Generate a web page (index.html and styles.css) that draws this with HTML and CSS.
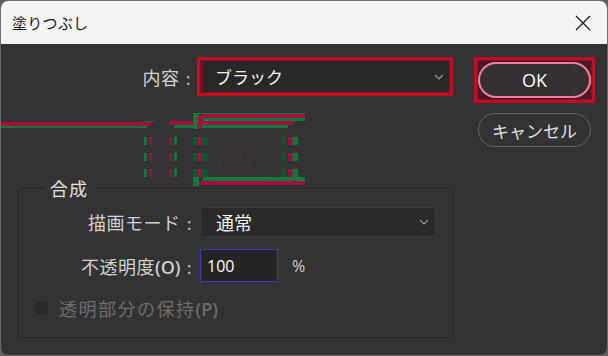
FILE: index.html
```html
<!DOCTYPE html>
<html lang="ja">
<head>
<meta charset="utf-8">
<title>塗りつぶし</title>
<link rel="stylesheet" href="styles.css">
</head>
<body>
<div class="dialog">
  <div class="titlebar">
    <span class="title">塗りつぶし</span>
    <svg class="close" width="16" height="16" viewBox="0 0 16 16"><path d="M1 1 L15 15 M15 1 L1 15" stroke="#1a1a1a" stroke-width="1.3" fill="none"/></svg>
  </div>
  <div class="body">
    <div class="main">
      <div class="row row-content">
        <span class="label">内容 <span class="colon">:</span></span>
        <div class="select hl"><span class="val">ブラック</span><svg class="chev" width="10" height="6" viewBox="0 0 10 6"><path d="M1 1 L5 5 L9 1" stroke="#9a9a9a" stroke-width="1.2" fill="none"/></svg></div>
      </div>
      <fieldset class="group">
        <legend>合成</legend>
        <div class="row">
          <span class="label">描画モード <span class="colon">:</span></span>
          <div class="select plain"><span class="val">通常</span><svg class="chev" width="10" height="6" viewBox="0 0 10 6"><path d="M1 1 L5 5 L9 1" stroke="#9a9a9a" stroke-width="1.2" fill="none"/></svg></div>
        </div>
        <div class="row row-op">
          <span class="label">不透明度<span class="lat">(O)</span> <span class="colon">:</span></span>
          <div class="input">100</div>
          <span class="pct">%</span>
        </div>
        <div class="row row-check">
          <span class="box"></span>
          <span class="check-label">透明部分の保持<span class="lat">(P)</span></span>
        </div>
      </fieldset>
    </div>
    <div class="buttons">
      <div class="hl-btn"><div class="btn ok">OK</div></div>
      <div class="btn cancel">キャンセル</div>
    </div>
  </div>
  <div class="glitch">
    <div class="g red" style="left:0;top:121px;width:150px;height:4px"></div>
    <div class="g green" style="left:0;top:125px;width:146px;height:2px"></div>
    <div class="g green" style="left:142px;top:120px;width:11px;height:1px"></div>
    <div class="g red" style="left:168px;top:120px;width:125px;height:4px"></div>
    <div class="g green" style="left:173px;top:124px;width:114px;height:3px"></div>
    <div class="g green" style="left:198px;top:112px;width:106px;height:1px"></div>
    <div class="g red" style="left:200px;top:113px;width:104px;height:4px"></div>
    <div class="g green" style="left:202px;top:117px;width:102px;height:3px"></div>
    <div class="g green" style="left:192px;top:112px;width:6px;height:16px"></div>
    <div class="g red" style="left:197px;top:115px;width:4px;height:13px"></div>
    <div class="g green" style="left:202px;top:176px;width:102px;height:4px"></div>
    <div class="g red" style="left:197px;top:180px;width:107px;height:4px"></div>
    <div class="g green" style="left:192px;top:176px;width:6px;height:9px"></div>

    <div class="dash" style="top:136px"></div>
    <div class="dash" style="top:152px"></div>
    <div class="dash" style="top:168px"></div>
    <span class="ghost">OK</span>
  </div>
</div>
</body>
</html>
```
FILE: styles.css
```css
* { box-sizing: border-box; }
html, body { margin: 0; padding: 0; }
body {
  background: #5e5e5e;
  font-family: "Noto Sans CJK JP", "Noto Sans", sans-serif;
  width: 608px;
  height: 356px;
  overflow: hidden;
}
.dialog {
  position: relative;
  width: 608px;
  height: 356px;
  border: 1px solid #6c6c6c;
  border-radius: 8px;
  overflow: hidden;
  background: #333333;
}
.titlebar {
  height: 43px;
  background: #f3f3f3;
  display: flex;
  align-items: center;
  justify-content: space-between;
  padding: 0 16px 0 11px;
}
.title {
  font-size: 15px;
  color: #1a1a1a;
  letter-spacing: 0.2px;
}
.close { display: block; margin-top: 1px; }
.body {
  display: flex;
  padding: 13px 0 0 17px;
}
.main { width: 435px; }
.row {
  display: flex;
  align-items: center;
}
.label {
  width: 173px;
  text-align: right;
  color: #d2d2d2;
  font-size: 18px;
  letter-spacing: 0.5px;
  white-space: nowrap;
}
.colon {
  font-family: "Open Sans", sans-serif;
  font-weight: 600;
  font-size: 16px;
  color: #bdbdbd;
  padding-left: 2px;
}
.row-content .label { margin-right: 6px; }
.lat { font-family: "Open Sans", "Noto Sans", sans-serif; font-weight: 600; font-size: 18px; letter-spacing: 0; color: #cfcfcf; }
.select {
  position: relative;
  display: flex;
  align-items: center;
  justify-content: space-between;
  color: #f2f2f2;
  font-size: 17px;
}
.select.hl {
  width: 256px;
  height: 39px;
  border: 3px solid #c30f1d;
  box-shadow: inset 0 0 0 1px #80102e, inset 2px 0 0 1px #6a1028;
  background: #282828;
  padding: 0 6px 0 15px;
}
.select.plain {
  margin-left: 8px;
  width: 236px;
  height: 30px;
  border: 1px solid #3b3b3b;
  border-radius: 3px;
  background: #2a2a2a;
  padding: 0 6px 0 15px;
  font-size: 18px;
}
.chev { display: block; }
.group {
  margin: 82px 0 0 0;
  border: 1px solid #262626;
  box-shadow: inset 0 0 0 1px #383838;
  padding: 9px 0 0 0;
  height: 160px;
  min-width: 0;
}
.group legend {
  margin-left: 24px;
  padding: 0 7px;
  font-size: 18px;
  line-height: 20px;
  letter-spacing: 1px;
  color: #e4e4e4;
}
.row-op { margin-top: 12px; }
.row-op .label { margin-right: 8px; }
.input {
  width: 78px;
  height: 33px;
  border: 1px solid #3a3ac4;
  background: #252525;
  color: #ffffff;
  font-family: "Open Sans", "Noto Sans", sans-serif;
  font-size: 16px;
  display: flex;
  align-items: center;
  padding-left: 6px;
}
.pct {
  margin-left: 14px;
  color: #d2d2d2;
  font-family: "Open Sans", sans-serif;
  font-size: 16px;
}
.row-check { margin-top: 13px; padding-left: 15px; }
.box {
  width: 14px;
  height: 14px;
  background: #2a2a2a;
  border-radius: 2px;
}
.check-label {
  margin-left: 11px;
  color: #6e6e6e;
  font-size: 18px;
  letter-spacing: 1.5px;
}
.check-label .lat { color: #6e6e6e; }
.buttons {
  margin-left: 21px;
  display: flex;
  flex-direction: column;
}
.hl-btn {
  width: 121px;
  height: 46px;
  border: 3px solid #c30f1d;
  box-shadow: inset 0 0 0 1px #8a102e;
  padding: 2px 1px;
  background: #4a1a2c;
}
.btn {
  width: 113px;
  height: 36px;
  border-radius: 18px;
  display: flex;
  align-items: center;
  justify-content: center;
}
.ok {
  border: 2px solid #f2819e;
  background: #343034;
  color: #ffffff;
  font-family: "Open Sans", "Noto Sans", sans-serif;
  font-size: 18px;
}
.cancel {
  margin: 10px 0 0 4px;
  height: 34px;
  border: 1.5px solid #656565;
  color: #e2e2e2;
  font-size: 17px;
}
.glitch {
  position: absolute;
  left: 0;
  top: 0;
  width: 0;
  height: 0;
}
.g { position: absolute; }
.red { background: #a3103c; }
.green { background: #0c7a3c; }
.dash {
  position: absolute;
  left: 143px;
  width: 160px;
  height: 8px;
  background:
    linear-gradient(to right,
      #0c7a3c 0, #0c7a3c 3px, transparent 3px, transparent 5px,
      #a3103c 5px, #a3103c 8px, transparent 8px, transparent 25px,
      #a3103c 25px, #a3103c 28px, transparent 28px, transparent 30px,
      #0c7a3c 30px, #0c7a3c 33px, transparent 33px, transparent 49px,
      #0a5a30 49px, #0a5a30 54px, #a3103c 54px, #a3103c 58px, #0a5a30 58px, #0a5a30 64px,
      transparent 64px, transparent 137px,
      #0a5a30 137px, #0a5a30 142px, transparent 142px, transparent 144px,
      #a3103c 144px, #a3103c 148px, #0c7a3c 149px, #0c7a3c 154px, transparent 154px);
}
.ghost {
  position: absolute;
  left: 214px;
  top: 144px;
  font-family: "Liberation Serif", serif;
  font-size: 28px;
  color: rgba(150, 40, 70, 0.1);
}
```
